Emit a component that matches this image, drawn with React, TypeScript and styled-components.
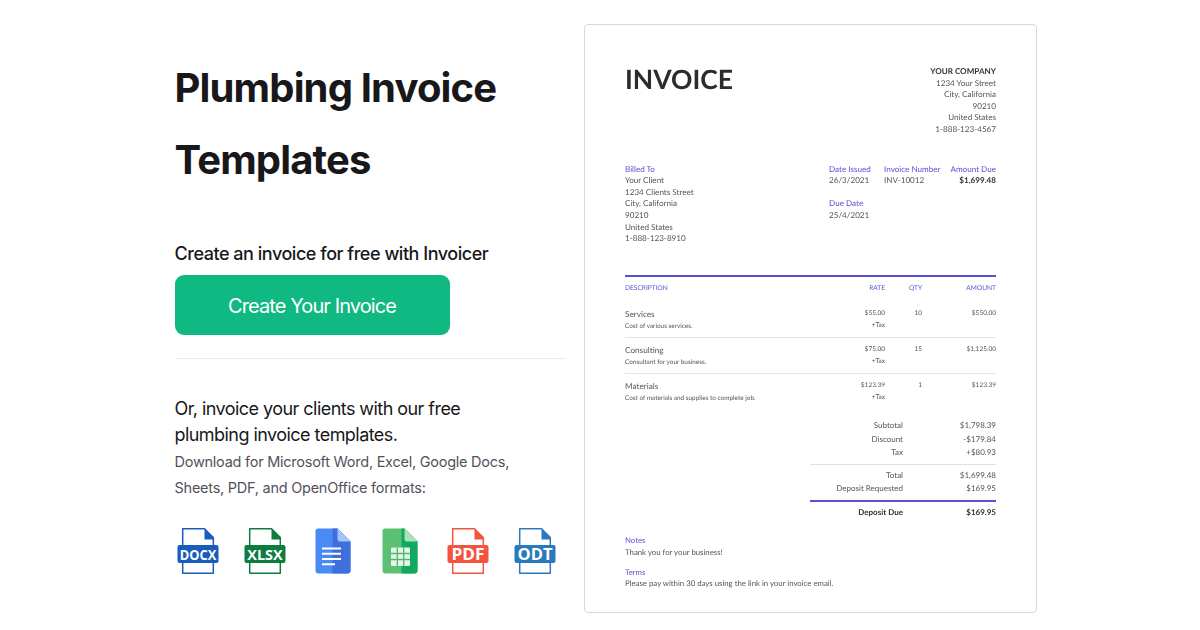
import styled, { createGlobalStyle } from 'styled-components';

const GlobalStyle = createGlobalStyle`
  html, body {
    margin: 0;
    padding: 0;
    background: #fff;
    font-family: Inter, "Liberation Sans", sans-serif;
  }
`;

const rows = [
  { name: 'Services', note: 'Cost of various services.', rate: '$55.00', qty: '10', amount: '$550.00' },
  { name: 'Consulting', note: 'Consultant for your business.', rate: '$75.00', qty: '15', amount: '$1,125.00' },
  { name: 'Materials', note: 'Cost of materials and supplies to complete job.', rate: '$123.39', qty: '1', amount: '$123.39' },
];

type FileProps = { label: string; color: string; size: number; span: number };

const OutlineFile = ({ label, color, size, span }: FileProps) => (
  <IconSvg viewBox="0 0 44 46">
    <path d="M6.7 .8H28.5L37.3 9.6V45.2H6.7Z" fill="#fff" stroke={color} strokeWidth="1.5" strokeLinejoin="round" />
    <path d="M28.5 .8L37.3 9.6V11.5H28.5Z" fill={color} />
    <rect x="1.5" y="17" width="41" height="18" rx="2" fill={color} />
    <IconLabel
      x="22"
      y="31.6"
      textAnchor="middle"
      fontSize={size}
      textLength={span}
      lengthAdjust="spacingAndGlyphs"
    >
      {label}
    </IconLabel>
  </IconSvg>
);

const DocsIcon = () => (
  <IconSvg viewBox="0 0 44 46">
    <path d="M7 .5H26.5L39.5 13.5V42.5A3 3 0 0 1 36.5 45.5H7.5A3 3 0 0 1 4.5 42.5V3A2.5 2.5 0 0 1 7 .5Z" fill="#4a8af4" />
    <path d="M21.5 .5H26.5L39.5 13.5V42.5A3 3 0 0 1 36.5 45.5H21.5Z" fill="#3f6fdc" />
    <path d="M26.5 .5L39.5 13.5H29A2.5 2.5 0 0 1 26.5 11Z" fill="#a5c4fb" />
    <path d="M11 20.5H30M11 25.8H30M11 31H30M11 36.3H24" stroke="#fff" strokeWidth="2" />
  </IconSvg>
);

const SheetsIcon = () => (
  <IconSvg viewBox="0 0 44 46">
    <path d="M7 .5H26.5L39.5 13.5V42.5A3 3 0 0 1 36.5 45.5H7.5A3 3 0 0 1 4.5 42.5V3A2.5 2.5 0 0 1 7 .5Z" fill="#5cc072" />
    <path d="M23.5 .5H26.5L39.5 13.5V42.5A3 3 0 0 1 36.5 45.5H23.5Z" fill="#10a95f" />
    <path d="M26.5 .5L39.5 13.5H29A2.5 2.5 0 0 1 26.5 11Z" fill="#abe0b8" />
    <rect x="13" y="19.5" width="19" height="18.5" rx="1" fill="#e6f5e9" />
    <path d="M19.3 19.5V38M25.7 19.5V38M13 25.5H32M13 31.5H32" stroke="#4fb96f" strokeWidth="1.3" />
  </IconSvg>
);

const App = () => (
  <>
    <GlobalStyle />
    <Page>
      <Intro>
        <Title>Plumbing Invoice Templates</Title>
        <Lead>Create an invoice for free with Invoicer</Lead>
        <CreateButton>Create Your Invoice</CreateButton>
        <Divider />
        <SubLead>Or, invoice your clients with our free plumbing invoice templates.</SubLead>
        <Formats>Download for Microsoft Word, Excel, Google Docs, Sheets, PDF, and OpenOffice formats:</Formats>
        <IconRow>
          <OutlineFile label="DOCX" color="#1a5cbd" size={14} span={36.5} />
          <OutlineFile label="XLSX" color="#0e7c3f" size={15} span={35.5} />
          <DocsIcon />
          <SheetsIcon />
          <OutlineFile label="PDF" color="#f4533f" size={16} span={33} />
          <OutlineFile label="ODT" color="#2a79bd" size={16} span={35} />
        </IconRow>
      </Intro>

      <Sheet>
        <SheetTop>
          <SheetTitle>INVOICE</SheetTitle>
          <Company>
            <strong>YOUR COMPANY</strong>
            <div>1234 Your Street</div>
            <div>City, California</div>
            <div>90210</div>
            <div>United States</div>
            <div>1-888-123-4567</div>
          </Company>
        </SheetTop>

        <Meta>
          <div>
            <Label>Billed To</Label>
            <div>Your Client</div>
            <div>1234 Clients Street</div>
            <div>City, California</div>
            <div>90210</div>
            <div>United States</div>
            <div>1-888-123-8910</div>
          </div>
          <MetaRight>
            <MetaDates>
              <Label>Date Issued</Label>
              <div>26/3/2021</div>
              <DueLabel>Due Date</DueLabel>
              <div>25/4/2021</div>
            </MetaDates>
            <div>
              <Label>Invoice Number</Label>
              <div>INV-10012</div>
            </div>
            <AmountDue>
              <Label>Amount Due</Label>
              <strong>$1,699.48</strong>
            </AmountDue>
          </MetaRight>
        </Meta>

        <TableHead>
          <HeadCell>DESCRIPTION</HeadCell>
          <HeadCell $right>RATE</HeadCell>
          <HeadCell $right>QTY</HeadCell>
          <HeadCell $right>AMOUNT</HeadCell>
        </TableHead>

        <ItemList>
          {rows.map((row) => (
            <ItemRow key={row.name}>
              <div>
                <ItemName>{row.name}</ItemName>
                <ItemNote>{row.note}</ItemNote>
              </div>
              <ItemCell>
                {row.rate}
                <div>+Tax</div>
              </ItemCell>
              <ItemCell>{row.qty}</ItemCell>
              <ItemCell>{row.amount}</ItemCell>
            </ItemRow>
          ))}
        </ItemList>

        <Totals>
          <TotalLine><span>Subtotal</span><span>$1,798.39</span></TotalLine>
          <TotalLine><span>Discount</span><span>-$179.84</span></TotalLine>
          <TotalLine><span>Tax</span><span>+$80.93</span></TotalLine>
          <ThinRule />
          <TotalLine><span>Total</span><span>$1,699.48</span></TotalLine>
          <TotalLine><span>Deposit Requested</span><span>$169.95</span></TotalLine>
          <ThickRule />
          <TotalLine $bold><span>Deposit Due</span><span>$169.95</span></TotalLine>
        </Totals>

        <Notes>
          <Label>Notes</Label>
          <div>Thank you for your business!</div>
        </Notes>
        <Terms>
          <Label>Terms</Label>
          <div>Please pay within 30 days using the link in your invoice email.</div>
        </Terms>
      </Sheet>
    </Page>
  </>
);

const Page = styled.div`
  width: 1200px;
  height: 630px;
  box-sizing: border-box;
  display: flex;
  align-items: flex-start;
  gap: 18px;
  padding-left: 174.5px;
  overflow: hidden;
`;

const Intro = styled.div`
  width: 391.5px;
  padding-top: 52px;
  color: #18181b;
`;

const Title = styled.h1`
  margin: 0;
  width: 340px;
  font-size: 40px;
  line-height: 72px;
  font-weight: 700;
  letter-spacing: -0.85px;
`;

const Lead = styled.p`
  margin: 44px 0 0;
  font-size: 18px;
  line-height: 28px;
  font-weight: 500;
  letter-spacing: -0.47px;
`;

const CreateButton = styled.button`
  display: block;
  width: 275px;
  height: 60px;
  margin-top: 7px;
  padding: 2px 0 0;
  border: 0;
  border-radius: 9px;
  background: #10b981;
  color: #fff;
  font: 400 20px Inter, sans-serif;
  letter-spacing: -0.9px;
`;

const Divider = styled.hr`
  margin: 23px 0 0;
  border: 0;
  border-top: 1px solid #ececec;
`;

const SubLead = styled.p`
  margin: 36.5px 0 0;
  width: 320px;
  font-size: 18px;
  line-height: 26px;
  font-weight: 400;
  letter-spacing: -0.55px;
`;

const Formats = styled.p`
  margin: 1px 0 0;
  width: 345px;
  font-size: 14.5px;
  line-height: 26.5px;
  letter-spacing: -0.25px;
  color: #52525b;
`;

const IconRow = styled.div`
  display: flex;
  gap: 23.6px;
  margin-top: 26.5px;
  padding-left: 1px;
`;

const IconSvg = styled.svg`
  width: 44px;
  height: 46px;
  flex: none;
`;

const IconLabel = styled.text`
  font-family: "Open Sans", sans-serif;
  font-weight: 700;
  fill: #fff;
`;

const Sheet = styled.div`
  width: 453px;
  height: 589px;
  margin-top: 24px;
  box-sizing: border-box;
  padding: 41px 40px 40px;
  border: 1px solid #d8d8d8;
  border-radius: 4px;
  background: #fff;
  font: 400 8.1px/11.6px Lato, sans-serif;
  text-rendering: geometricPrecision;
  color: #555;
  white-space: nowrap;
  filter: blur(0.3px);
`;

const SheetTop = styled.div`
  display: flex;
  justify-content: space-between;
`;

const SheetTitle = styled.h2`
  margin: 0;
  font-size: 26.5px;
  line-height: 26px;
  font-weight: 700;
  color: #2c2c2c;
`;

const Company = styled.div`
  text-align: right;
  strong {
    color: #333;
  }
`;

const Meta = styled.div`
  display: flex;
  justify-content: space-between;
  margin-top: 28px;
`;

const MetaRight = styled.div`
  display: flex;
`;

const MetaDates = styled.div`
  width: 55px;
`;

const AmountDue = styled.div`
  text-align: right;
  margin-left: 10px;
  strong {
    color: #333;
  }
`;

const Label = styled.div`
  color: #5a50d8;
`;

const DueLabel = styled(Label)`
  margin-top: 11.6px;
`;

const TableHead = styled.div`
  display: grid;
  grid-template-columns: 1fr 60px 37px 74px;
  margin-top: 30px;
  padding-top: 6px;
  border-top: 2px solid #5a50d8;
`;

const HeadCell = styled.div<{ $right?: boolean }>`
  font-size: 6.6px;
  color: #5a50d8;
  text-align: ${(p) => (p.$right ? 'right' : 'left')};
`;

const ItemList = styled.div`
  margin-top: 8px;
`;

const ItemRow = styled.div`
  display: grid;
  grid-template-columns: 1fr 60px 37px 74px;
  box-sizing: border-box;
  height: 36px;
  padding-top: 6px;
  border-bottom: 1px solid #e4e4e4;
  &:last-child {
    border-bottom: 0;
  }
`;

const ItemName = styled.div`
  font-size: 8.2px;
  line-height: 12px;
`;

const ItemNote = styled.div`
  font-size: 6.4px;
  line-height: 13px;
`;

const ItemCell = styled.div`
  font-size: 6.5px;
  line-height: 11.6px;
  text-align: right;
`;

const Totals = styled.div`
  width: 186px;
  margin: 9px 0 0 auto;
  font-size: 8px;
`;

const TotalLine = styled.div<{ $bold?: boolean }>`
  display: grid;
  grid-template-columns: 93px 93px;
  line-height: 13.5px;
  font-weight: ${(p) => (p.$bold ? 700 : 400)};
  color: ${(p) => (p.$bold ? '#333' : '#555')};
  span {
    text-align: right;
  }
`;

const ThinRule = styled.div`
  margin: 4px 0;
  border-top: 1px solid #e0e0e0;
`;

const ThickRule = styled.div`
  margin: 4px 0;
  border-top: 2px solid #5a50d8;
`;

const Notes = styled.div`
  margin-top: 16px;
  font-size: 7.8px;
`;

const Terms = styled.div`
  margin-top: 8px;
  font-size: 7.8px;
`;

export default App;
